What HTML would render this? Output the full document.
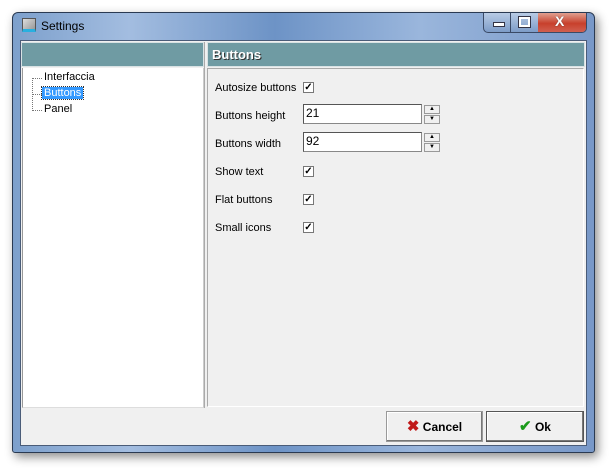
<!DOCTYPE html>
<html><head><style>
body{margin:0;width:611px;height:471px;background:#fff;position:relative;overflow:hidden;font-family:"Liberation Sans",sans-serif;font-size:11px;}
.a{position:absolute;}
.frame{left:12px;top:12px;width:581px;height:439px;border:1px solid #2a3a52;border-radius:6px 6px 3px 3px;background:linear-gradient(90deg,#7da0cc 0%,#a3bde0 20%,#6d93c6 45%,#9ab6dc 70%,#7898c8 100%);box-shadow:3px 4px 10px rgba(0,0,0,.45);}
.client{left:20px;top:40px;width:565px;height:404px;background:#f0f0f0;border:1px solid #4a5c78;}
.hdr{background:#6f9ba3;border:1px solid #d8e2e4;box-sizing:border-box;}
.lbl{color:#000;}
.inp{background:#fff;border:1px solid #888;border-top-color:#555;border-left-color:#555;box-sizing:border-box;padding-left:2px;line-height:17px;font-size:12px;}
.cb{width:11px;height:11px;border:1px solid #777;background:#fff;box-sizing:border-box;font-size:10px;line-height:9px;text-align:center;font-weight:bold;}
.spin{width:16px;height:9px;background:#f0f0f0;border:1px solid #999;box-sizing:border-box;font-size:6px;line-height:6px;text-align:center;}
.btn{background:#f0f0f0;border:1px solid #999;box-shadow:inset -1px -1px #777,inset 1px 1px #fff;box-sizing:border-box;font-weight:bold;font-size:12px;text-align:center;line-height:30px;}
</style></head><body>
<div class="a frame"></div>
<div class="a" style="left:22px;top:18px;width:14px;height:14px;background:linear-gradient(135deg,#ddd,#999);border:1px solid #555;box-sizing:border-box;border-bottom:3px solid #28b0e0"></div>
<div class="a" style="left:41px;top:19px;font-size:12px;color:#000">Settings</div>
<div class="a" style="left:483px;top:13px;width:102px;height:19px;border:1px solid #3a4a66;border-top:none;border-radius:0 0 5px 5px;background:linear-gradient(#b8cbe5,#7d9cc8);overflow:hidden">
 <div class="a" style="left:26px;top:0;width:1px;height:19px;background:#3a4a66"></div>
 <div class="a" style="left:9px;top:9px;width:10px;height:3px;background:#fff;border:1px solid #334"></div>
 <div class="a" style="left:35px;top:4px;width:7px;height:6px;border:2px solid #fff;outline:1px solid #334"></div>
 <div class="a" style="left:54px;top:0;width:48px;height:19px;background:linear-gradient(#e0a090,#c8402c 55%,#d06050)"></div>
 <div class="a" style="left:71px;top:0;color:#fff;font-weight:bold;font-size:14px;text-shadow:0 0 1px #333">X</div>
</div>
<div class="a client"></div>
<div class="a hdr" style="left:21px;top:42px;width:183px;height:25px"></div>
<div class="a hdr" style="left:207px;top:42px;width:378px;height:25px"></div>
<div class="a" style="left:212px;top:47px;color:#fff;font-weight:bold;font-size:13px;text-shadow:1px 1px #333">Buttons</div>
<div class="a" style="left:22px;top:68px;width:180px;height:339px;background:#fff;border-left:1px solid #999;border-right:1px solid #ccc;border-bottom:1px solid #ddd"></div>
<div class="a" style="left:204px;top:42px;width:1px;height:366px;background:#aaa"></div>
<div class="a" style="left:207px;top:68px;width:377px;height:339px;border:1px solid #aaa;border-right-color:#fff;border-bottom-color:#fff;box-sizing:border-box"></div>
<div class="a" style="left:32px;top:78px;width:1px;height:33px;border-left:1px dotted #777"></div>
<div class="a" style="left:33px;top:78px;width:9px;border-top:1px dotted #777"></div>
<div class="a" style="left:33px;top:94px;width:9px;border-top:1px dotted #777"></div>
<div class="a" style="left:33px;top:110px;width:9px;border-top:1px dotted #777"></div>
<div class="a" style="left:44px;top:71px">Interfaccia</div>
<div class="a" style="left:42px;top:87px;background:#3399ff;color:#fff;padding:0 2px;outline:1px dotted #333">Buttons</div>
<div class="a" style="left:44px;top:103px">Panel</div>
<div class="a lbl" style="left:215px;top:82px">Autosize buttons</div>
<div class="a cb" style="left:303px;top:82px">✓</div>
<div class="a lbl" style="left:215px;top:110px">Buttons height</div>
<div class="a inp" style="left:303px;top:104px;width:119px;height:20px">21</div>
<div class="a spin" style="left:424px;top:105px">▲</div><div class="a spin" style="left:424px;top:115px">▼</div>
<div class="a lbl" style="left:215px;top:138px">Buttons width</div>
<div class="a inp" style="left:303px;top:132px;width:119px;height:20px">92</div>
<div class="a spin" style="left:424px;top:133px">▲</div><div class="a spin" style="left:424px;top:143px">▼</div>
<div class="a lbl" style="left:215px;top:166px">Show text</div>
<div class="a cb" style="left:303px;top:166px">✓</div>
<div class="a lbl" style="left:215px;top:194px">Flat buttons</div>
<div class="a cb" style="left:303px;top:194px">✓</div>
<div class="a lbl" style="left:215px;top:222px">Small icons</div>
<div class="a cb" style="left:303px;top:222px">✓</div>
<div class="a btn" style="left:386px;top:411px;width:97px;height:31px"><span style="color:#c01818;font-size:15px">✖</span> Cancel</div>
<div class="a btn" style="left:486px;top:411px;width:98px;height:31px;border-color:#555"><span style="color:#1a9a1a;font-size:15px">✔</span> Ok</div>
</body></html>
